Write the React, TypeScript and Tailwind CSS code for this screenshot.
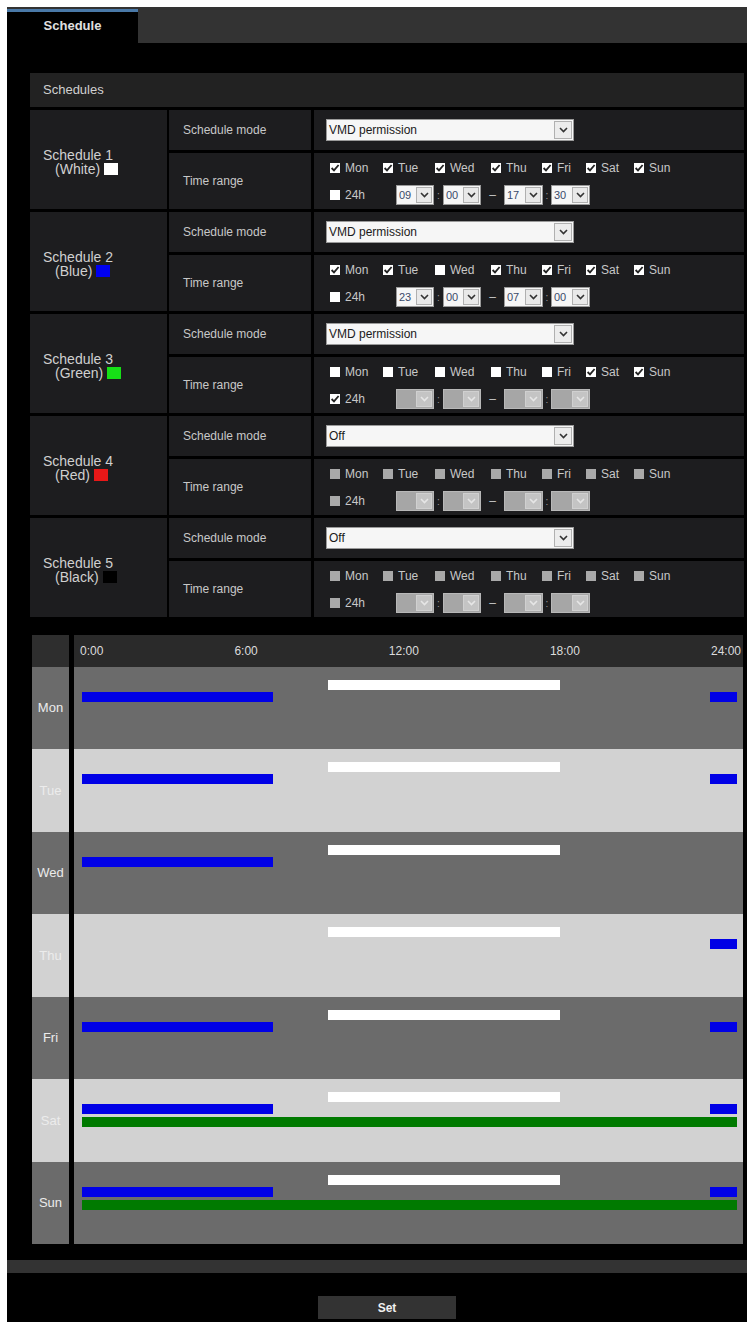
import type { ReactNode } from 'react';

type Sched = {
  n: number;
  color: string;
  swatch: string;
  mode: string;
  days: boolean[];
  h24: boolean;
  times: string[] | null;
  off: boolean;
};

const DAY_NAMES = ['Mon', 'Tue', 'Wed', 'Thu', 'Fri', 'Sat', 'Sun'];
const DAY_WIDTHS = ['w-[53px]', 'w-[52px]', 'w-[56px]', 'w-[51px]', 'w-[44px]', 'w-[48px]', 'w-auto'];

const schedules: Sched[] = [
  { n: 1, color: 'White', swatch: 'bg-white', mode: 'VMD permission', days: [true, true, true, true, true, true, true], h24: false, times: ['09', '00', '17', '30'], off: false },
  { n: 2, color: 'Blue', swatch: 'bg-[#0000f0]', mode: 'VMD permission', days: [true, true, false, true, true, true, true], h24: false, times: ['23', '00', '07', '00'], off: false },
  { n: 3, color: 'Green', swatch: 'bg-[#16e016]', mode: 'VMD permission', days: [false, false, false, false, false, true, true], h24: true, times: null, off: false },
  { n: 4, color: 'Red', swatch: 'bg-[#e81818]', mode: 'Off', days: [false, false, false, false, false, false, false], h24: false, times: null, off: true },
  { n: 5, color: 'Black', swatch: 'bg-black', mode: 'Off', days: [false, false, false, false, false, false, false], h24: false, times: null, off: true },
];

// bars per day: [start hour, end hour]
const chart = DAY_NAMES.map((d, i) => ({
  day: d,
  white: [[9, 17.5]],
  blue: [
    ...(i !== 3 ? [[0, 7]] : []),
    ...(i !== 2 ? [[23, 24]] : []),
  ],
  green: i >= 5 ? [[0, 24]] : [],
}));

const HOUR = 655 / 24;

function Chevron({ color = '#333' }: { color?: string }) {
  return (
    <svg width="9" height="6" viewBox="0 0 9 6">
      <path d="M1 1 L4.5 4.5 L8 1" fill="none" stroke={color} strokeWidth="1.6" />
    </svg>
  );
}

function Checkbox({ checked, disabled }: { checked: boolean; disabled?: boolean }) {
  return (
    <span className={`flex h-[10px] w-[10px] items-center justify-center ${disabled ? 'bg-[#a9a9a9]' : 'bg-white'}`}>
      {checked && (
        <svg width="10" height="10" viewBox="0 0 10 10">
          <path d="M1.6 5 L4 7.4 L8.6 2" fill="none" stroke="#222" strokeWidth="1.8" />
        </svg>
      )}
    </span>
  );
}

function TimeSelect({ value, w }: { value?: string; w: string }) {
  const disabled = value === undefined;
  return (
    <div className={`flex h-[20px] ${w} border ${disabled ? 'border-[#b8b8b8] bg-[#a6a6a6]' : 'border-[#9a9a9a] bg-[#f6f6f6]'}`}>
      <span className="flex-1 pl-[2px] text-[11px] leading-[18px] text-[#3a4a6a]">{value}</span>
      <span className={`m-[1px] flex w-[16px] items-center justify-center border ${disabled ? 'border-[#d0d0d0] bg-[#c4c4c4]' : 'border-[#b0b0b0] bg-[#e9e9e9]'}`}>
        <Chevron color={disabled ? '#e6e6e6' : '#333'} />
      </span>
    </div>
  );
}

function Cell({ className = '', children }: { className?: string; children?: ReactNode }) {
  return <div className={`bg-[#1d1d1f] ${className}`}>{children}</div>;
}

function Bar({ range, color }: { range: number[]; color: string }) {
  return (
    <span
      className={`absolute top-0 h-[10px] ${color}`}
      style={{ left: 8 + range[0] * HOUR, width: (range[1] - range[0]) * HOUR }}
    />
  );
}

function ScheduleGroup({ s }: { s: Sched }) {
  return (
    <div className="flex h-[99px] gap-[2px]">
      <Cell className="flex w-[137px] flex-col justify-center pl-[13px] pt-[4px] text-[14px] leading-[14px] text-[#d0d0d0]">
        <span>Schedule {s.n}</span>
        <span className="flex items-center pl-[12px]">
          ({s.color})<span className={`ml-[4px] inline-block h-[12px] w-[14px] ${s.swatch}`} />
        </span>
      </Cell>
      <div className="flex flex-1 flex-col gap-[3px]">
        <div className="flex h-[40px] gap-[3px]">
          <Cell className="flex w-[142px] items-center pl-[14px] text-[12px] text-[#c8c8c8]">Schedule mode</Cell>
          <Cell className="flex flex-1 items-center pl-[12px]">
            <div className="flex h-[22px] w-[248px] border border-[#9a9a9a] bg-[#f6f6f6]">
              <span className="flex-1 pl-[2px] text-[12px] leading-[20px] text-[#1a1a1a]">{s.mode}</span>
              <span className="m-[1px] flex w-[18px] items-center justify-center border border-[#b0b0b0] bg-[#ececec]">
                <Chevron />
              </span>
            </div>
          </Cell>
        </div>
        <div className="flex flex-1 gap-[3px]">
          <Cell className="flex w-[142px] items-center pl-[14px] text-[12px] text-[#c8c8c8]">Time range</Cell>
          <Cell className="flex flex-1 flex-col gap-[9px] pl-[16px] pt-[7px] text-[12px] text-[#c8c8c8]">
            <div className="flex h-[16px] items-center">
              {DAY_NAMES.map((d, i) => (
                <span key={d} className={`flex items-center gap-[5px] ${DAY_WIDTHS[i]}`}>
                  <Checkbox checked={s.days[i]} disabled={s.off} />
                  {d}
                </span>
              ))}
            </div>
            <div className="flex h-[20px] items-center">
              <span className="flex w-[66px] items-center gap-[5px]">
                <Checkbox checked={s.h24} disabled={s.off} />
                24h
              </span>
              <TimeSelect value={s.times?.[0]} w="w-[38px]" />
              <span className="w-[9px] text-center text-[10px] text-[#999]">:</span>
              <TimeSelect value={s.times?.[1]} w="w-[38px]" />
              <span className="w-[23px] text-center text-[#c8c8c8]">–</span>
              <TimeSelect value={s.times?.[2]} w="w-[39px]" />
              <span className="w-[8px] text-center text-[10px] text-[#999]">:</span>
              <TimeSelect value={s.times?.[3]} w="w-[39px]" />
            </div>
          </Cell>
        </div>
      </div>
    </div>
  );
}

export default function App() {
  return (
    <div className="h-[1323px] w-[751px] bg-white pl-[7px] pt-[7px] font-['Liberation_Sans',Arial,sans-serif]">
      <div className="flex h-[1315px] w-[740px] flex-col bg-black">
        <div className="flex h-[36px] bg-[#333] pt-[2px]">
          <div className="flex w-[131px] items-center justify-center border-t-[3px] border-[#4a79a8] bg-black pb-[4px] text-[13px] font-bold text-[#e0e0e0]">
            Schedule
          </div>
        </div>

        <div className="pl-[23px] pr-[3px]">
          <div className="mt-[30px] flex h-[34px] items-center bg-[#222] pl-[13px] text-[13px] text-[#d0d0d0]">Schedules</div>
          <div className="mt-[3px] flex flex-col gap-[3px]">
            {schedules.map((s) => (
              <ScheduleGroup key={s.n} s={s} />
            ))}
          </div>

          <div className="ml-[2px] mr-[1px] mt-[18px] flex">
            <div className="flex w-[37px] flex-col">
              <div className="h-[32px] bg-[#2e2e2e]" />
              <div className="grid h-[577px] grid-rows-7">
                {chart.map((r, i) => (
                  <div
                    key={r.day}
                    className={`flex items-center justify-center text-[13px] text-[#ececec] ${i % 2 ? 'bg-[#d2d2d2]' : 'bg-[#6b6b6b]'}`}
                  >
                    {r.day}
                  </div>
                ))}
              </div>
            </div>
            <div className="w-[5px] bg-black" />
            <div className="flex flex-1 flex-col">
              <div className="flex h-[32px] items-center justify-between bg-[#2a2a2a] pl-[6px] pr-[2px] text-[12px] text-[#dcdcdc]">
                <span>0:00</span>
                <span>6:00</span>
                <span>12:00</span>
                <span>18:00</span>
                <span>24:00</span>
              </div>
              <div className="grid h-[577px] grid-rows-7">
                {chart.map((r, i) => (
                  <div key={r.day} className={`flex flex-col pt-[13px] ${i % 2 ? 'bg-[#d2d2d2]' : 'bg-[#6b6b6b]'}`}>
                    <div className="relative h-[10px]">
                      {r.white.map((b, j) => (
                        <Bar key={j} range={b} color="bg-white" />
                      ))}
                    </div>
                    <div className="relative mt-[2px] h-[10px]">
                      {r.blue.map((b, j) => (
                        <Bar key={j} range={b} color="bg-[#0000e6]" />
                      ))}
                    </div>
                    <div className="relative mt-[3px] h-[10px]">
                      {r.green.map((b, j) => (
                        <Bar key={j} range={b} color="bg-[#007a00]" />
                      ))}
                    </div>
                  </div>
                ))}
              </div>
            </div>
          </div>
        </div>

        <div className="mt-[16px] h-[13px] bg-[#333]" />

        <div className="mt-[23px] flex justify-center pl-[23px] pr-[3px]">
          <button type="button" className="h-[23px] w-[138px] bg-[#333] text-[12px] font-bold text-[#f0f0f0]">
            Set
          </button>
        </div>
      </div>
    </div>
  );
}
